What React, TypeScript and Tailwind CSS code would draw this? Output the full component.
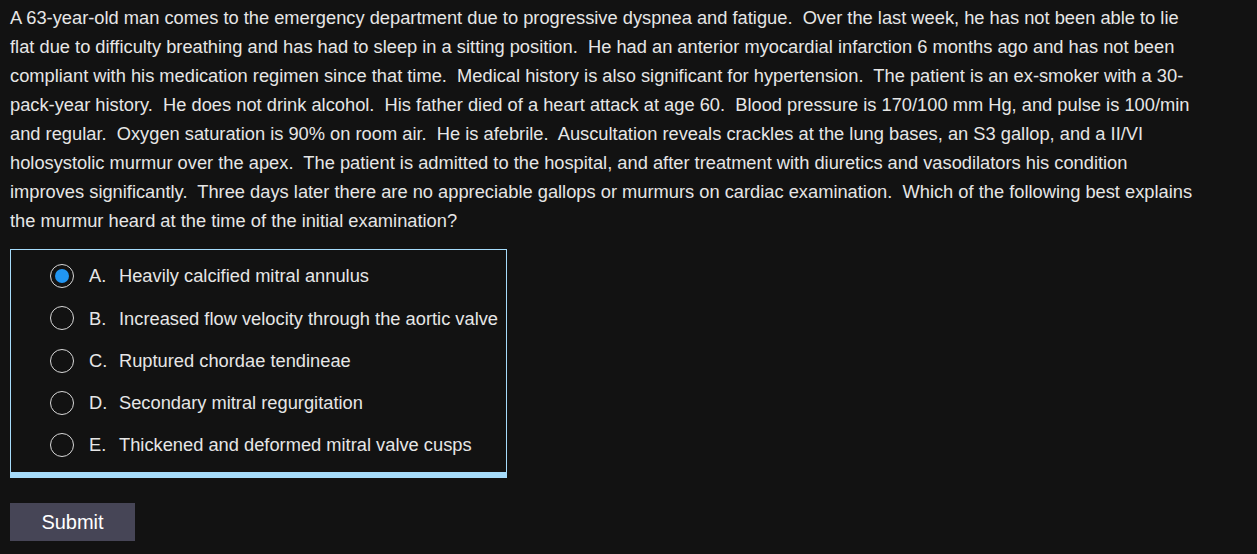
import React, { useState } from "react";

const lines = [
  "A 63-year-old man comes to the emergency department due to progressive dyspnea and fatigue.  Over the last week, he has not been able to lie",
  "flat due to difficulty breathing and has had to sleep in a sitting position.  He had an anterior myocardial infarction 6 months ago and has not been",
  "compliant with his medication regimen since that time.  Medical history is also significant for hypertension.  The patient is an ex-smoker with a 30-",
  "pack-year history.  He does not drink alcohol.  His father died of a heart attack at age 60.  Blood pressure is 170/100 mm Hg, and pulse is 100/min",
  "and regular.  Oxygen saturation is 90% on room air.  He is afebrile.  Auscultation reveals crackles at the lung bases, an S3 gallop, and a II/VI",
  "holosystolic murmur over the apex.  The patient is admitted to the hospital, and after treatment with diuretics and vasodilators his condition",
  "improves significantly.  Three days later there are no appreciable gallops or murmurs on cardiac examination.  Which of the following best explains",
  "the murmur heard at the time of the initial examination?",
];

const options = [
  ["A.", "Heavily calcified mitral annulus"],
  ["B.", "Increased flow velocity through the aortic valve"],
  ["C.", "Ruptured chordae tendineae"],
  ["D.", "Secondary mitral regurgitation"],
  ["E.", "Thickened and deformed mitral valve cusps"],
];

export default function App() {
  const [sel, setSel] = useState(0);
  return (
    <div
      className="min-h-[554px] w-full bg-[#121212] text-[#e6e6e6] pl-[10px] pt-[3px]"
      style={{ fontFamily: '"Liberation Sans", Arial, sans-serif' }}
    >
      <div className="text-[18.3px] leading-[29px]">
        {lines.map((l, i) => (
          <div key={i} className="whitespace-pre">
            {l}
          </div>
        ))}
      </div>
      <div className="mt-[14px] w-[497px] border border-[#a6dcfb] border-b-[6px] pt-[5px] pb-[6px]">
        {options.map(([k, t], i) => (
          <div
            key={k}
            className="flex items-center h-[42.25px] pl-[39px] cursor-pointer"
            onClick={() => setSel(i)}
          >
            <div className="w-[24px] h-[24px] rounded-full border-[1.5px] border-[#d8d8d8] flex items-center justify-center">
              {sel === i && <div className="w-[14px] h-[14px] rounded-full bg-[#2196f3]" />}
            </div>
            <span className="ml-[15px] text-[18.3px] w-[30px]">{k}</span>
            <span className="text-[18.3px]">{t}</span>
          </div>
        ))}
      </div>
      <button className="mt-[25px] w-[125px] h-[38px] bg-[#464556] text-white text-[20px]">
        Submit
      </button>
    </div>
  );
}
